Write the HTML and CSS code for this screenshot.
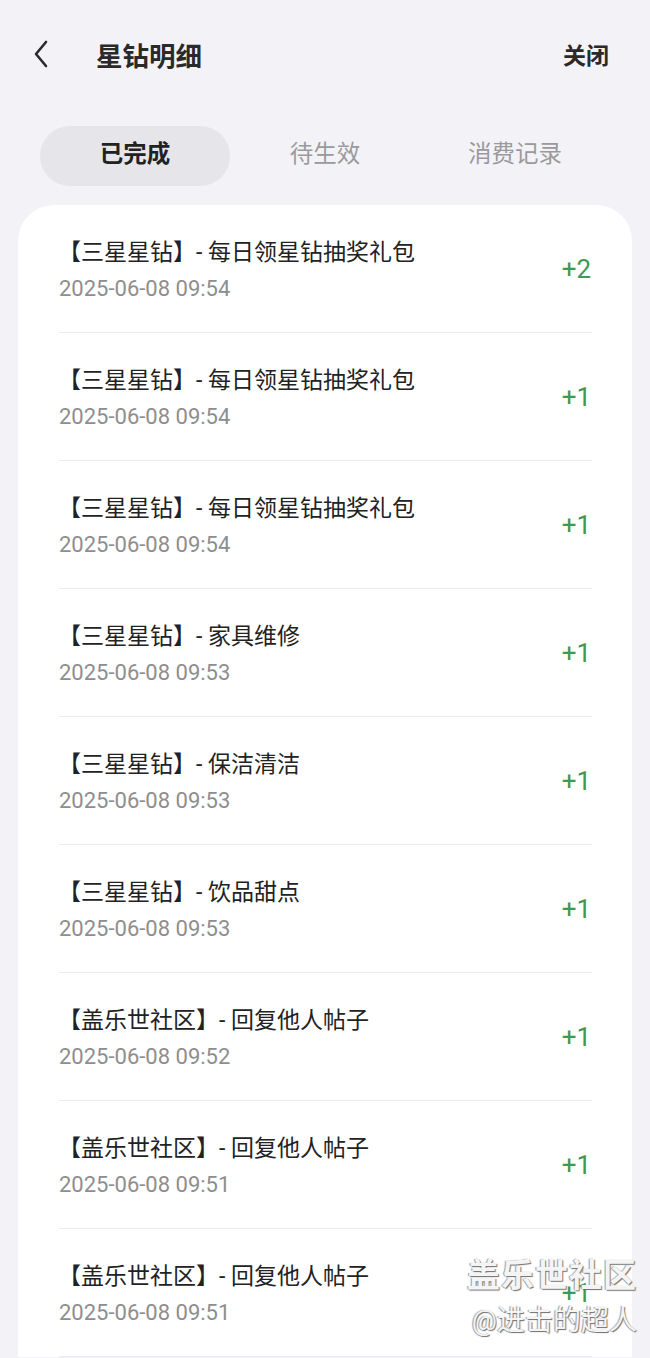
FILE: index.html
```html
<!DOCTYPE html>
<html lang="zh">
<head>
<meta charset="utf-8">
<link rel="stylesheet" href="styles.css">
</head>
<body>
<div class="page">
  <header class="topbar">
    <svg class="back" width="20" height="30" viewBox="0 0 20 30"><path d="M14 3 L4 15 L14 27" fill="none" stroke="#2a2a2a" stroke-width="2.6" stroke-linecap="round" stroke-linejoin="round"/></svg>
    <div class="title">星钻明细</div>
    <div class="close">关闭</div>
  </header>
  <nav class="tabs">
    <div class="tab active">已完成</div>
    <div class="tab">待生效</div>
    <div class="tab">消费记录</div>
  </nav>
  <section class="card">
    <div class="row"><div class="info"><div class="name">【三星星钻】- 每日领星钻抽奖礼包</div><div class="date">2025-06-08 09:54</div></div><div class="val">+2</div></div>
    <div class="row"><div class="info"><div class="name">【三星星钻】- 每日领星钻抽奖礼包</div><div class="date">2025-06-08 09:54</div></div><div class="val">+1</div></div>
    <div class="row"><div class="info"><div class="name">【三星星钻】- 每日领星钻抽奖礼包</div><div class="date">2025-06-08 09:54</div></div><div class="val">+1</div></div>
    <div class="row"><div class="info"><div class="name">【三星星钻】- 家具维修</div><div class="date">2025-06-08 09:53</div></div><div class="val">+1</div></div>
    <div class="row"><div class="info"><div class="name">【三星星钻】- 保洁清洁</div><div class="date">2025-06-08 09:53</div></div><div class="val">+1</div></div>
    <div class="row"><div class="info"><div class="name">【三星星钻】- 饮品甜点</div><div class="date">2025-06-08 09:53</div></div><div class="val">+1</div></div>
    <div class="row"><div class="info"><div class="name">【盖乐世社区】- 回复他人帖子</div><div class="date">2025-06-08 09:52</div></div><div class="val">+1</div></div>
    <div class="row"><div class="info"><div class="name">【盖乐世社区】- 回复他人帖子</div><div class="date">2025-06-08 09:51</div></div><div class="val">+1</div></div>
    <div class="row"><div class="info"><div class="name">【盖乐世社区】- 回复他人帖子</div><div class="date">2025-06-08 09:51</div></div><div class="val">+1</div></div>
  </section>
  <div class="watermark">
    <div class="wm1">盖乐世社区</div>
    <div class="wm2">@进击的超人</div>
  </div>
</div>
</body>
</html>
```

FILE: styles.css
```css
html, body {
  margin: 0;
  padding: 0;
}
body {
  background: #f3f3f7;
  font-family: Roboto, "Noto Sans CJK SC", sans-serif;
  color: #222;
  overflow: hidden;
}
.page {
  position: relative;
  width: 650px;
  height: 1358px;
  overflow: hidden;
}
.topbar {
  display: flex;
  align-items: center;
  height: 108px;
  padding: 0 41px 0 32px;
  box-sizing: border-box;
}
.back {
  display: block;
}
.title {
  margin-left: 44px;
  font-size: 26.5px;
  font-weight: 700;
  color: #2a2a2a;
  flex: 1;
}
.close {
  font-size: 23px;
  font-weight: 700;
  color: #2a2a2a;
}
.tabs {
  display: flex;
  padding: 18px 40px 0;
  height: 60px;
}
.tab {
  width: 190px;
  height: 60px;
  display: flex;
  align-items: center;
  justify-content: center;
  font-size: 23.5px;
  line-height: 1;
  padding-bottom: 2px;
  box-sizing: border-box;
  color: #9a9a9c;
  border-radius: 30px;
}
.tab.active {
  background: #e5e5ea;
  color: #222;
  font-weight: 700;
}
.card {
  margin: 19px 18px 0;
  background: #fff;
  border-radius: 36px 36px 0 0;
  padding: 0 40px 0 41px;
}
.row {
  display: flex;
  align-items: center;
  height: 127px;
  border-bottom: 1px solid #ececec;
}
.info {
  flex: 1;
  display: flex;
  flex-direction: column;
  gap: 6px;
  margin-top: 5px;
}
.name {
  font-size: 23px;
  line-height: 30px;
  color: #222;
  margin-left: -1px;
}
.date {
  font-size: 22px;
  line-height: 30px;
  color: #8e8e90;
}
.val {
  font-size: 26px;
  font-weight: 400;
  color: #3b9b4e;
  margin-right: 1px;
}
.watermark {
  position: absolute;
  right: 13px;
  top: 1256px;
  text-align: right;
  color: #f4f4f4;
  text-shadow: 1px 1px 1px #6e6e6e, -1px 0 1px #9a9a9a;
}
.wm1 {
  font-size: 33px;
  font-weight: 700;
  line-height: 40px;
  letter-spacing: 1px;
}
.wm2 {
  font-size: 28px;
  line-height: 36px;
  margin-top: 7px;
}
```
